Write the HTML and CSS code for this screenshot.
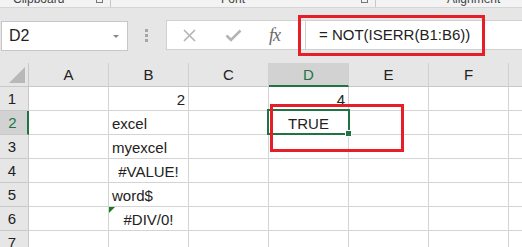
FILE: index.html
```html
<!DOCTYPE html>
<html>
<head>
<meta charset="UTF-8">
<title>NOT(ISERR)</title>
<link rel="stylesheet" href="styles.css">
</head>
<body>

<div class="ribbon">
  <div class="group g-clip"><span class="glabel">Clipboard</span><span class="launch"></span></div>
  <div class="group g-font"><span class="glabel">Font</span><span class="launch"></span></div>
  <div class="group g-align"><span class="glabel">Alignment</span></div>
</div>

<div class="fbar">
  <div class="namebox"><span>D2</span><i class="drop"></i></div>
  <div class="dots"><i></i><i></i><i></i></div>
  <div class="editbox">
    <div class="btns">
      <svg class="ico-x" width="13" height="13" viewBox="0 0 13 13"><path d="M1 1L12 12M12 1L1 12" stroke="#b4b4b4" stroke-width="1.6" fill="none"/></svg>
      <svg class="ico-ok" width="17" height="13" viewBox="0 0 17 13"><path d="M1.5 6.5L6 11L15.5 1.5" stroke="#b4b4b4" stroke-width="2.6" fill="none"/></svg>
      <span class="fx">fx</span>
    </div>
    <div class="formula">= NOT(ISERR(B1:B6))</div>
  </div>
</div>

<div class="sheet">
  <div class="hd corner"><i class="tri"></i></div>
  <div class="hd col">A</div><div class="hd col">B</div><div class="hd col">C</div>
  <div class="hd col on">D</div><div class="hd col">E</div><div class="hd col">F</div><div class="hd col">G</div>

  <div class="hd row">1</div>
  <div class="c"></div><div class="c num">2</div><div class="c"></div><div class="c num">4</div><div class="c"></div><div class="c"></div><div class="c"></div>

  <div class="hd row on">2</div>
  <div class="c"></div><div class="c">excel</div><div class="c"></div><div class="c mid sel">TRUE</div><div class="c"></div><div class="c"></div><div class="c"></div>

  <div class="hd row">3</div>
  <div class="c"></div><div class="c">myexcel</div><div class="c"></div><div class="c"></div><div class="c"></div><div class="c"></div><div class="c"></div>

  <div class="hd row">4</div>
  <div class="c"></div><div class="c mid">#VALUE!</div><div class="c"></div><div class="c"></div><div class="c"></div><div class="c"></div><div class="c"></div>

  <div class="hd row">5</div>
  <div class="c"></div><div class="c">word$</div><div class="c"></div><div class="c"></div><div class="c"></div><div class="c"></div><div class="c"></div>

  <div class="hd row">6</div>
  <div class="c"></div><div class="c mid err">#DIV/0!</div><div class="c"></div><div class="c"></div><div class="c"></div><div class="c"></div><div class="c"></div>

  <div class="hd row">7</div>
  <div class="c"></div><div class="c"></div><div class="c"></div><div class="c"></div><div class="c"></div><div class="c"></div><div class="c"></div>
</div>

<div class="mark mark-formula"></div>
<div class="mark mark-cell"></div>

</body>
</html>
```

FILE: styles.css
```css
*{ margin: 0; padding: 0; box-sizing: border-box; }
html, body{ width: 522px; height: 247px; overflow: hidden; }
body{ font-family: "Liberation Sans", Arial, sans-serif; color: #222; background: #fff; position: relative; }

/* ribbon group labels, cut off at the top */
.ribbon{ display: flex; height: 8px; background: #f3f3f3; border-bottom: 1px solid #d5d5d5; overflow: hidden; }
.group{ display: flex; position: relative; font-size: 12px; color: #444; line-height: 14px; }
.glabel{ margin-top: -8px; }
.g-clip{ width: 111px; padding-left: 13px; border-right: 1px solid #c8c8c8; }
.g-font{ width: 265px; padding-left: 110px; border-right: 1px solid #c8c8c8; }
.g-align{ padding-left: 71px; }
.launch{ position: absolute; right: 7px; top: -4px; width: 7px; height: 7px; border: 1px solid #777; }

/* formula bar */
.fbar{ display: flex; align-items: flex-start; height: 55px; background: #e6e6e6; padding-top: 12px; }
.namebox{ display: flex; align-items: center; justify-content: space-between; margin: 1px 0 0 1px; width: 127px; height: 30px; background: #fff; border: 1px solid #c6c6c6; padding: 0 8px 0 7px; font-size: 16px; color: #222; }
.drop{ width: 0; height: 0; border-left: 3px solid transparent; border-right: 3px solid transparent; border-top: 3px solid #888; }
.dots{ display: flex; flex-direction: column; gap: 2px; width: 38px; padding: 9px 0 0 17px; }
.dots i{ width: 3px; height: 3px; background: #a6a6a6; }
.editbox{ display: flex; flex: 1; height: 30px; background: #fff; border: 1px solid #d0d0d0; border-right: 0; }
.btns{ display: flex; align-items: center; width: 139px; border-right: 1px solid #d0d0d0; padding-left: 16px; }
.ico-x{ margin-right: 29px; }
.ico-ok{ margin-right: 27px; margin-top: 1px; }
.fx{ font-family: "Liberation Serif", serif; font-style: italic; font-size: 18px; color: #6a6a6a; letter-spacing: -1px; }
.formula{ padding: 5px 0 0 13px; font-size: 15px; color: #222; white-space: nowrap; }

/* sheet */
.sheet{ display: grid; grid-template-columns: 29px repeat(7, 80px); grid-auto-rows: 24px; width: 589px; }
.hd{ background: #e6e6e6; border-right: 1px solid #c8c8c8; border-bottom: 1px solid #c8c8c8; font-size: 15px; color: #222; display: flex; align-items: center; justify-content: center; }
.hd.col{ border-right-color: #d0d0d0; }
.hd.row{ justify-content: center; padding-right: 4px; }
.hd.on{ background: #d2d2d2; color: #217346; }
.hd.col.on{ border-bottom: 2px solid #217346; }
.hd.row.on{ border-right: 2px solid #217346; padding-right: 2px; }
.corner{ position: relative; }
.tri{ position: absolute; right: 3px; bottom: 3px; width: 0; height: 0; border-left: 16px solid transparent; border-bottom: 16px solid #b8b8b8; }

.c{ position: relative; border-right: 1px solid #d4d4d4; border-bottom: 1px solid #d4d4d4; font-size: 15px; display: flex; align-items: flex-end; padding: 0 3px 2px; white-space: nowrap; }
.c.num{ justify-content: flex-end; }
.c.mid{ justify-content: center; }
.err::before{ content: ""; position: absolute; left: 0; top: 0; border-top: 6px solid #1f7a1f; border-right: 6px solid transparent; }
.sel::after{ content: ""; position: absolute; left: -2px; top: -2px; right: -2px; bottom: -1px; border: 2px solid #217346; }
.sel::before{ content: ""; position: absolute; right: -4px; bottom: -3px; width: 5px; height: 5px; background: #217346; border: 1px solid #fff; z-index: 1; }

/* red annotation boxes */
.mark{ position: absolute; border: 3px solid #e61e28; }
.mark-formula{ left: 298px; top: 15px; width: 187px; height: 41px; }
.mark-cell{ left: 270px; top: 104px; width: 134px; height: 48px; }
```
